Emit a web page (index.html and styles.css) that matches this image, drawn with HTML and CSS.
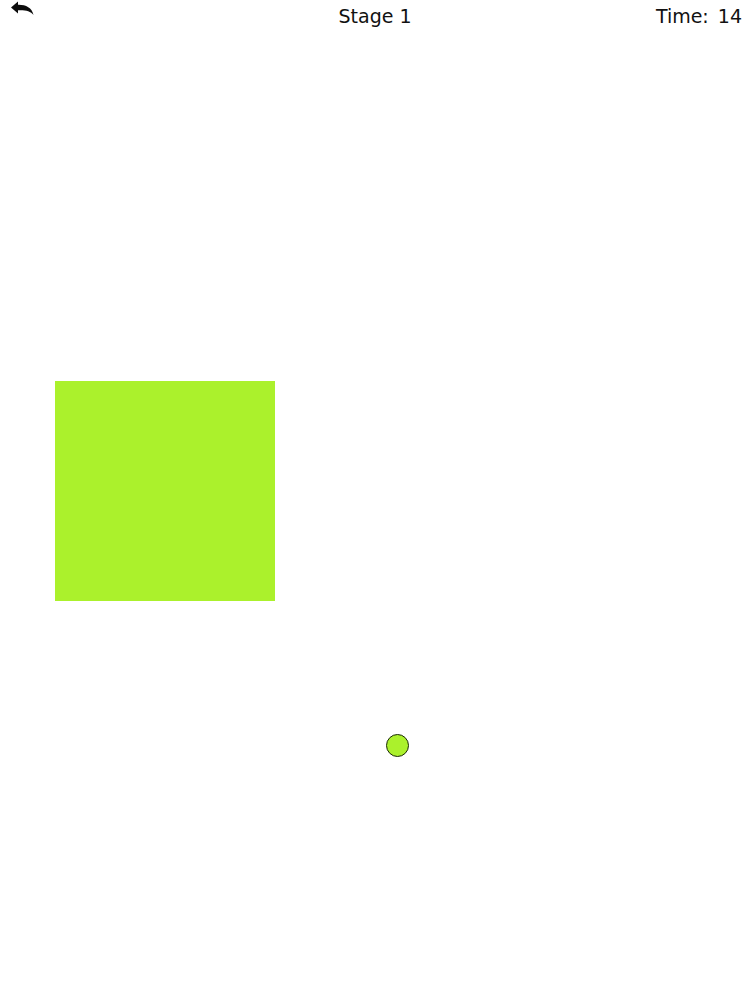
FILE: index.html
```html
<!DOCTYPE html>
<html>
<head>
<meta charset="utf-8">
<link rel="stylesheet" href="styles.css">
</head>
<body>
<div class="game">
  <header class="bar">
    <div class="back">
      <svg width="26" height="18" viewBox="0 0 26 18">
        <path d="M1 7.5 L8 1.5 L8 4.8 C15.5 4.6 22 7.5 23.5 15 C20.5 11 15.5 10 8 10.3 L8 13.5 Z" fill="#0d0d0d"/>
      </svg>
    </div>
    <div class="stage">Stage 1</div>
    <div class="time">Time: 14</div>
  </header>
  <div class="field">
    <div class="block"></div>
    <div class="ball"></div>
  </div>
</div>
</body>
</html>
```
FILE: styles.css
```css
html, body {
  margin: 0;
  padding: 0;
  background: #ffffff;
}
.game {
  position: relative;
  width: 750px;
  height: 1000px;
  font-family: "Comic Sans MS", "DejaVu Sans", sans-serif;
  color: #111;
}
.bar {
  display: grid;
  grid-template-columns: 1fr auto 1fr;
  align-items: start;
  height: 32px;
}
.back {
  padding-left: 10px;
  height: 18px;
}
.back svg {
  display: block;
}
.stage {
  font-size: 19px;
  line-height: 20px;
  padding-top: 6px;
  text-align: center;
}
.time {
  font-size: 19px;
  line-height: 20px;
  padding-top: 6px;
  text-align: right;
  padding-right: 8px;
  word-spacing: 3px;
}
.field {
  position: relative;
  height: 968px;
}
.block {
  position: absolute;
  left: 55px;
  top: 349px;
  width: 220px;
  height: 220px;
  background: #abf12c;
}
.ball {
  position: absolute;
  left: 386px;
  top: 702px;
  width: 21px;
  height: 21px;
  border-radius: 50%;
  background: #abf12c;
  border: 1.5px solid #1b2a08;
}
```
